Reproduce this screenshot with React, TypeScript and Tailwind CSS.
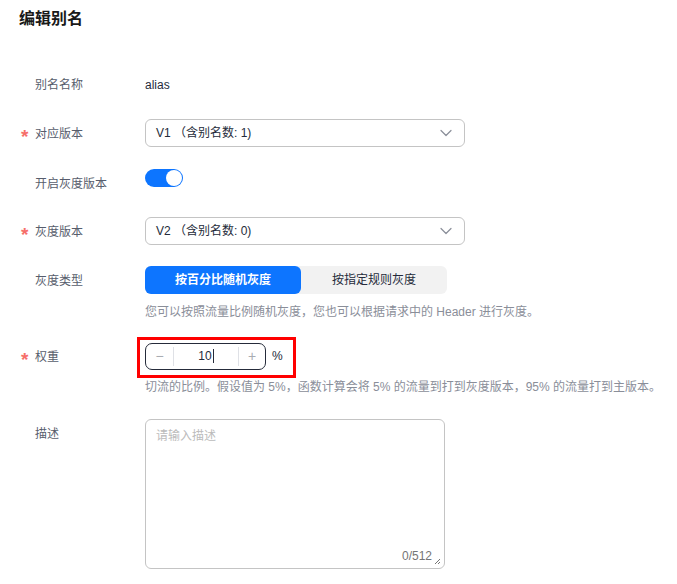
import React from "react";

const font = { fontFamily: '"Liberation Sans", "Noto Sans CJK SC", sans-serif' };

function Label({ text, required }: { text: string; required?: boolean }) {
  return (
    <div className="relative w-[145px] shrink-0 pl-[35px] pt-[1px] text-[12px] leading-[28px] text-[#575d6c]">
      {required && (
        <span className="absolute left-[21px] top-[4px] text-[19px] font-bold leading-[28px] text-[#f66f6a]">*</span>
      )}
      {text}
    </div>
  );
}

function Chevron() {
  return (
    <svg width="12" height="8" viewBox="0 0 12 8" fill="none">
      <path d="M1 1.5 L6 6.5 L11 1.5" stroke="#8a8e99" strokeWidth="1.2" strokeLinecap="round" strokeLinejoin="round" />
    </svg>
  );
}

function Select({ value }: { value: string }) {
  return (
    <div className="flex h-[28px] w-[320px] items-center justify-between rounded-[6px] border border-[#c4c4c4] bg-white pl-[10px] pr-[12px] text-[12px] text-[#252b3a]">
      <span>{value}</span>
      <Chevron />
    </div>
  );
}

export default function App() {
  return (
    <div className="min-h-[584px] w-[677px] bg-white" style={font}>
      <div className="pl-[19px] pt-[7px] text-[16px] font-bold leading-[24px] text-[#191919]">编辑别名</div>

      <div className="mt-[39px] flex flex-col">
        {/* alias name */}
        <div className="flex h-[28px]">
          <Label text="别名名称" />
          <div className="pt-[1px] text-[12px] leading-[28px] text-[#252b3a]">alias</div>
        </div>

        {/* main version */}
        <div className="mt-[21px] flex h-[28px]">
          <Label text="对应版本" required />
          <Select value="V1 （含别名数: 1)" />
        </div>

        {/* gray release switch */}
        <div className="mt-[21px] flex h-[28px]">
          <div className="pt-[1px]">
            <Label text="开启灰度版本" />
          </div>
          <div className="mt-[1px] flex h-[18px] w-[38px] items-center justify-end rounded-full bg-[#0d75ff] pr-[1px]">
            <div className="h-[16px] w-[16px] rounded-full bg-white" />
          </div>
        </div>

        {/* gray version */}
        <div className="mt-[21px] flex h-[28px]">
          <Label text="灰度版本" required />
          <Select value="V2 （含别名数: 0)" />
        </div>

        {/* gray type */}
        <div className="mt-[21px] flex">
          <Label text="灰度类型" />
          <div>
            <div className="flex h-[28px] w-[302px] rounded-[6px] bg-[#f2f2f2] text-[12px]">
              <div className="flex w-[156px] items-center justify-center rounded-[6px] bg-[#0d75ff] font-bold text-white">
                按百分比随机灰度
              </div>
              <div className="flex flex-1 items-center justify-center text-[#252b3a]">按指定规则灰度</div>
            </div>
            <div className="mt-[10px] text-[12px] leading-[16px] text-[#8a8e99]">
              您可以按照流量比例随机灰度，您也可以根据请求中的 Header 进行灰度。
            </div>
          </div>
        </div>

        {/* weight */}
        <div className="mt-[22px] flex">
          <Label text="权重" required />
          <div>
            <div className="flex h-[28px] items-center">
              <div className="relative flex h-[27px] w-[121px] items-center rounded-[7px] border border-[#252b3a] bg-white text-[#a9acb2]">
                <div className="pointer-events-none absolute -left-[9px] -top-[7px] h-[41px] w-[159px] border-[3px] border-[#ff0000]" />
                <div className="flex h-full w-[27px] items-center justify-center text-[14px]">−</div>
                <div className="h-[19px] w-px bg-[#dfe1e6]" />
                <div className="flex flex-1 items-center justify-center text-[12px] text-[#252b3a]">
                  10<span className="ml-[1px] inline-block h-[14px] w-px bg-[#252b3a]" />
                </div>
                <div className="h-[19px] w-px bg-[#dfe1e6]" />
                <div className="flex h-full w-[26px] items-center justify-center text-[14px]">+</div>
              </div>
              <span className="ml-[6px] text-[12px] text-[#252b3a]">%</span>
            </div>
            <div className="mt-[9px] text-[12px] leading-[16px] text-[#8a8e99]">
              切流的比例。假设值为 5%，函数计算会将 5% 的流量到打到灰度版本，95% 的流量打到主版本。
            </div>
          </div>
        </div>

        {/* description */}
        <div className="mt-[24px] flex">
          <Label text="描述" />
          <div className="relative h-[150px] w-[300px] rounded-[6px] border border-[#c4c4c4] bg-white">
            <div className="pl-[10px] pt-[6px] text-[12px] leading-[20px] text-[#bbbbbb]">请输入描述</div>
            <div className="absolute bottom-[3px] right-[12px] text-[12px] text-[#757575]">0/512</div>
            <svg className="absolute bottom-[3px] right-[3px]" width="7" height="7" viewBox="0 0 7 7">
              <path d="M1 6 L6 1 M4 6 L6 4" stroke="#757575" strokeWidth="1" />
            </svg>
          </div>
        </div>
      </div>
    </div>
  );
}
